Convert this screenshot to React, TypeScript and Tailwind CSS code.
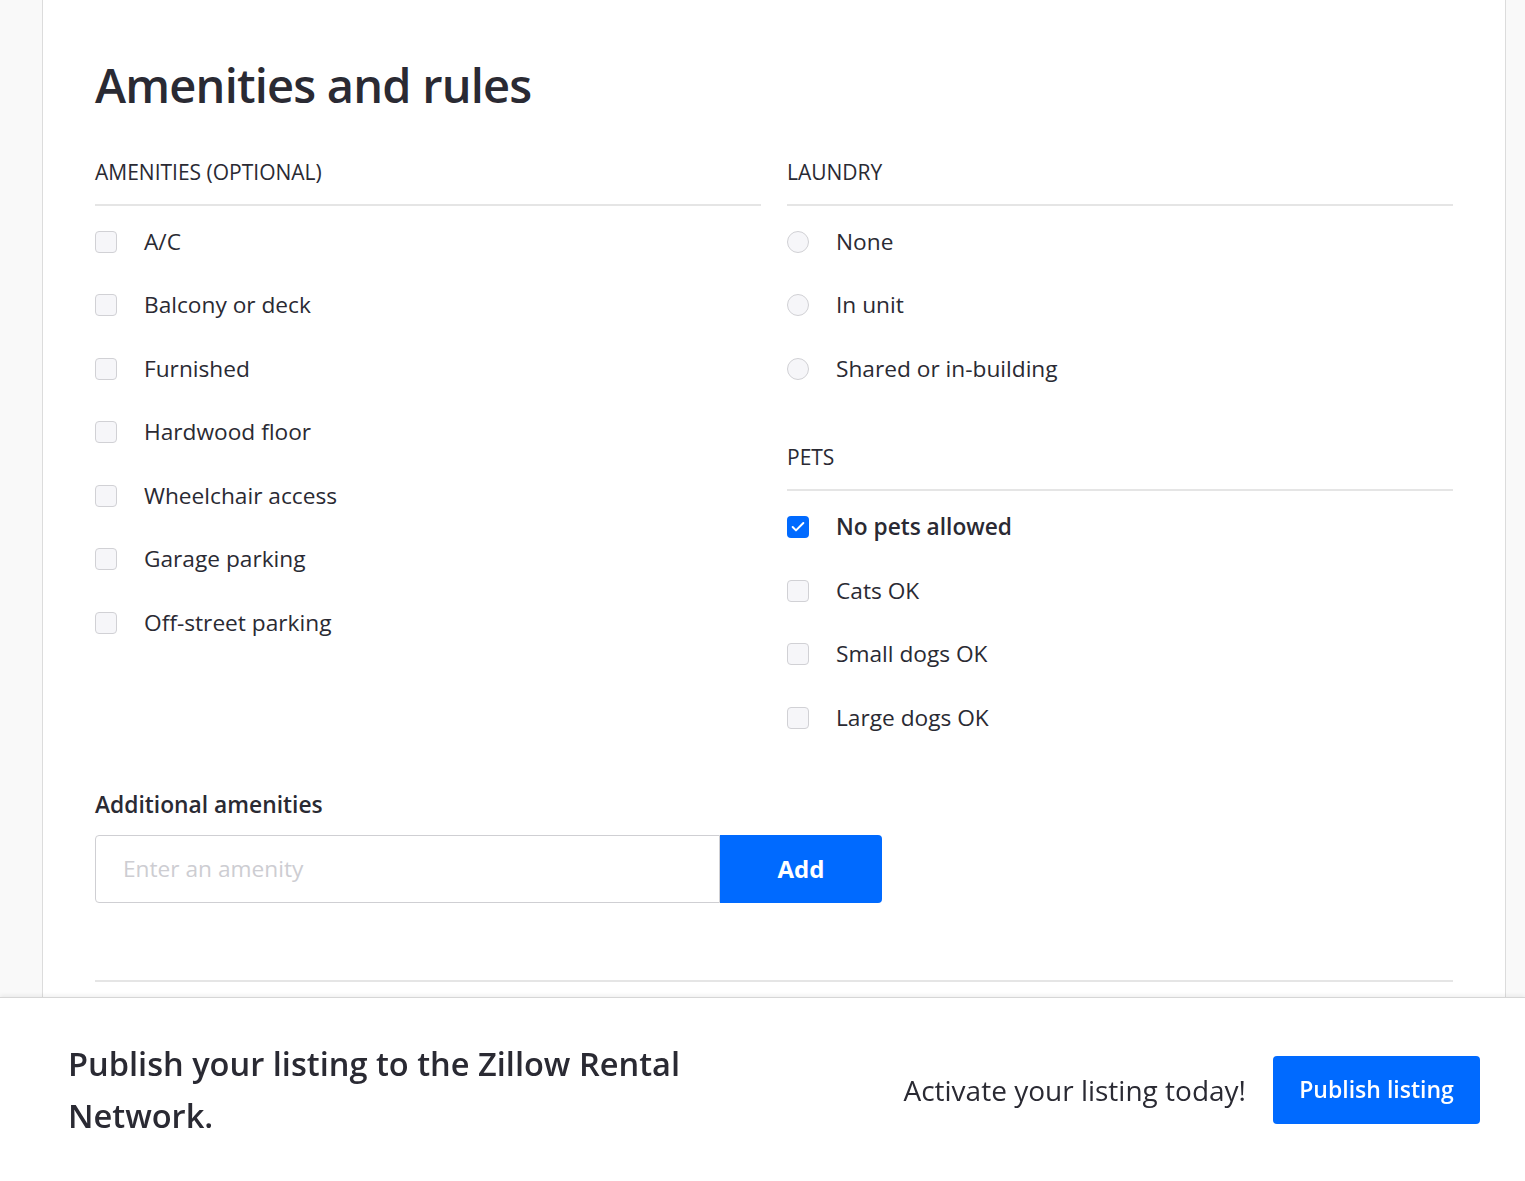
import { Check } from "lucide-react";

const amenities = [
  "A/C",
  "Balcony or deck",
  "Furnished",
  "Hardwood floor",
  "Wheelchair access",
  "Garage parking",
  "Off-street parking",
];

const laundry = ["None", "In unit", "Shared or in-building"];

const pets = [
  { label: "No pets allowed", checked: true },
  { label: "Cats OK", checked: false },
  { label: "Small dogs OK", checked: false },
  { label: "Large dogs OK", checked: false },
];

function SectionHeader({ title, className = "" }: { title: string; className?: string }) {
  return (
    <div className={`border-b-2 border-[#e5e5e5] pb-[18px] ${className}`}>
      <h3 className="text-[21px] leading-[28px] text-[#2a2a33]">{title}</h3>
    </div>
  );
}

function CheckRow({ label, checked = false }: { label: string; checked?: boolean }) {
  return (
    <label className="flex h-[63.5px] items-center gap-[27px]">
      {checked ? (
        <span className="flex h-[22px] w-[22px] items-center justify-center rounded-[4px] bg-[#006aff]">
          <Check size={16} strokeWidth={3} className="text-white" />
        </span>
      ) : (
        <span className="h-[22px] w-[22px] rounded-[4px] border border-[#d1d1d5] bg-[#f6f6f9]" />
      )}
      <span className={`text-[22.7px] text-[#2a2a33] ${checked ? "font-semibold" : ""}`}>{label}</span>
    </label>
  );
}

function RadioRow({ label }: { label: string }) {
  return (
    <label className="flex h-[63.5px] items-center gap-[27px]">
      <span className="h-[22px] w-[22px] rounded-full border border-[#d1d1d5] bg-[#f6f6f9]" />
      <span className="text-[22.7px] text-[#2a2a33]">{label}</span>
    </label>
  );
}

export default function App() {
  return (
    <div className="min-h-screen bg-[#f9f9f9] font-['Open_Sans',sans-serif] text-[#2a2a33]">
      {/* Card */}
      <div className="ml-[42px] h-[1181px] w-[1464px] border-x border-[#dcdcdc] bg-white px-[52px] pt-[57px]">
        <h1 className="text-[47px] font-semibold leading-[56px] tracking-[-0.8px] text-[#2a2a33]">
          Amenities and rules
        </h1>

        <div className="mt-[45px] grid grid-cols-2 gap-x-[26px]">
          <div>
            <SectionHeader title="AMENITIES (OPTIONAL)" />
            <div className="pt-[4px]">
              {amenities.map((a) => (
                <CheckRow key={a} label={a} />
              ))}
            </div>
          </div>

          <div>
            <SectionHeader title="LAUNDRY" />
            <div className="pt-[4px]">
              {laundry.map((l) => (
                <RadioRow key={l} label={l} />
              ))}
            </div>

            <SectionHeader title="PETS" className="mt-[42px]" />
            <div className="pt-[5px]">
              {pets.map((p) => (
                <CheckRow key={p.label} label={p.label} checked={p.checked} />
              ))}
            </div>
          </div>
        </div>

        {/* Additional amenities */}
        <div className="mt-[41px]">
          <p className="text-[22.8px] font-semibold leading-[28px]">Additional amenities</p>
          <div className="mt-[16px] flex h-[68px] w-[787px]">
            <input
              placeholder="Enter an amenity"
              className="h-full w-[625px] rounded-l-[4px] border border-[#cfcfd3] px-[27px] text-[22.7px] text-[#2a2a33] placeholder:text-[#cdcdd2] focus:outline-none"
            />
            <button className="h-full w-[162px] rounded-r-[4px] bg-[#006aff] text-[24px] font-bold text-white">
              Add
            </button>
          </div>
        </div>

        <div className="mt-[77px] border-t-2 border-[#e5e5e5]" />
      </div>

      {/* Sticky publish bar */}
      <div className="fixed bottom-0 left-0 right-0 flex h-[184px] items-center justify-between border-t border-[#d6d6d6] bg-white pl-[68px] pr-[45px] shadow-[0_-2px_4px_rgba(0,0,0,0.06)]">
        <p className="w-[670px] text-[32.6px] font-semibold leading-[52px] text-[#2a2a33]">
          Publish your listing to the Zillow Rental Network.
        </p>
        <div className="flex items-center gap-[27px]">
          <span className="text-[28px] text-[#2a2a33]">Activate your listing today!</span>
          <button className="h-[68px] w-[207px] rounded-[4px] bg-[#006aff] text-[23px] font-semibold text-white">
            Publish listing
          </button>
        </div>
      </div>
    </div>
  );
}
